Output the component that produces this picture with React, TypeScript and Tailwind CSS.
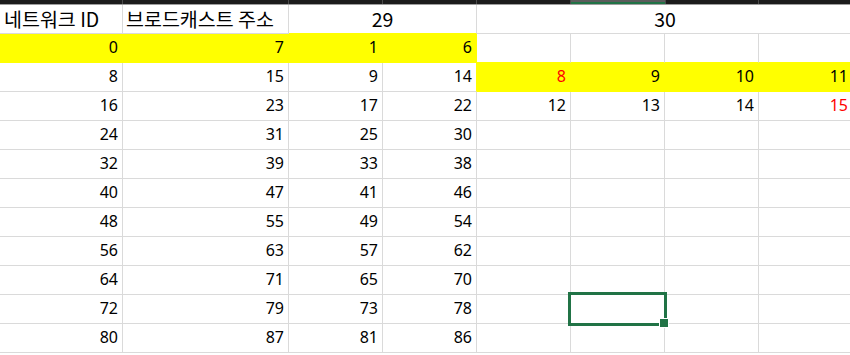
import React from 'react';

type C = { v?: string | number; y?: boolean; r?: boolean };

const widths = ['w-[123px]', 'w-[166px]', 'w-[94px]', 'w-[94px]', 'w-[94px]', 'w-[94px]', 'w-[94px]', 'w-[94px]'];

const plain = (nums: number[]): C[] => nums.map((v) => ({ v }));

const rows: C[][] = [
  [{ v: 0, y: true }, { v: 7, y: true }, { v: 1, y: true }, { v: 6, y: true }, {}, {}, {}, {}],
  [...plain([8, 15, 9, 14]), { v: 8, y: true, r: true }, { v: 9, y: true }, { v: 10, y: true }, { v: 11, y: true }],
  [...plain([16, 23, 17, 22, 12, 13, 14]), { v: 15, r: true }],
  [...plain([24, 31, 25, 30]), {}, {}, {}, {}],
  [...plain([32, 39, 33, 38]), {}, {}, {}, {}],
  [...plain([40, 47, 41, 46]), {}, {}, {}, {}],
  [...plain([48, 55, 49, 54]), {}, {}, {}, {}],
  [...plain([56, 63, 57, 62]), {}, {}, {}, {}],
  [...plain([64, 71, 65, 70]), {}, {}, {}, {}],
  [...plain([72, 79, 73, 78]), {}, {}, {}, {}],
  [...plain([80, 87, 81, 86]), {}, {}, {}, {}],
];

function Cell({ c, w, right, below }: { c: C; w: string; right?: C; below?: C }) {
  const yellowR = c.y || right?.y;
  const yellowB = c.y || below?.y;
  return (
    <div
      className={`${w} h-[29px] shrink-0 border-r border-b pr-[4px] text-right leading-[27px] ${
        c.y ? 'bg-[#ffff00]' : 'bg-white'
      } ${yellowR ? 'border-r-[#ffff00]' : 'border-r-[#dadada]'} ${
        yellowB ? 'border-b-[#ffff00]' : 'border-b-[#dadada]'
      } ${c.r ? 'text-[#ff0000]' : 'text-black'}`}
    >
      {c.v}
    </div>
  );
}

export default function App() {
  return (
    <div className="relative w-[850px] h-[355px] overflow-hidden bg-white font-['Noto_Sans','Noto_Sans_CJK_KR',sans-serif] text-[16px]">
      {/* column header strip */}
      <div className="flex h-[5px] border-b border-[#9e9e9e] bg-[#1c1c1c]">
        <div className="w-[123px] shrink-0 border-r border-[#4a4a4a]" />
        <div className="w-[166px] shrink-0 border-r border-[#4a4a4a]" />
        <div className="w-[94px] shrink-0 border-r border-[#4a4a4a]" />
        <div className="w-[94px] shrink-0 border-r border-[#4a4a4a]" />
        <div className="w-[94px] shrink-0 border-r border-[#4a4a4a]" />
        <div className="w-[94px] shrink-0 flex flex-col">
          <div className="h-[2px] bg-[#5c5c5c]" />
          <div className="h-[2px] bg-[#217346]" />
        </div>
        <div className="w-[94px] shrink-0 border-l border-r border-[#4a4a4a]" />
      </div>

      {/* header row */}
      <div className="flex h-[29px] font-['Noto_Sans_CJK_KR',sans-serif] text-[19.5px] leading-[28px] text-black">
        <div className="w-[123px] shrink-0 border-r border-b border-[#dadada] pl-[4px] whitespace-nowrap">네트워크 ID</div>
        <div className="w-[166px] shrink-0 border-r border-b border-[#dadada] pl-[3px] whitespace-nowrap">브로드캐스트 주소</div>
        <div className="w-[188px] shrink-0 border-r border-b border-r-[#dadada] border-b-[#ffff00] text-center">29</div>
        <div className="w-[376px] shrink-0 border-b border-[#dadada] text-center">30</div>
      </div>

      {rows.map((row, i) => (
        <div key={i} className="flex">
          {row.map((c, j) => (
            <Cell key={j} c={c} w={widths[j]} right={row[j + 1]} below={rows[i + 1]?.[j]} />
          ))}
        </div>
      ))}

      {/* active cell */}
      <div className="absolute left-[568px] top-[292px] w-[99px] h-[34px] border-[3px] border-[#217346]" />
      <div className="absolute left-[659px] top-[318px] w-[10px] h-[10px] bg-[#217346] border border-white" />
    </div>
  );
}
